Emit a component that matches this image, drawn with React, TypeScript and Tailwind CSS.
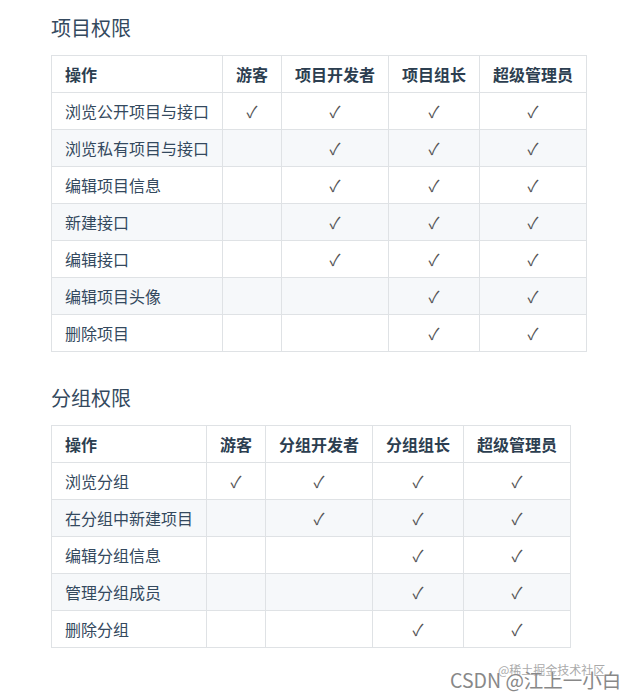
const font = { fontFamily: '"Noto Sans CJK SC", "Noto Sans", sans-serif' };

type Table = {
  title: string;
  head: string[];
  first: number;
  rows: [string, boolean[]][];
};

const tables: Table[] = [
  {
    title: "项目权限",
    head: ["操作", "游客", "项目开发者", "项目组长", "超级管理员"],
    first: 171,
    rows: [
      ["浏览公开项目与接口", [true, true, true, true]],
      ["浏览私有项目与接口", [false, true, true, true]],
      ["编辑项目信息", [false, true, true, true]],
      ["新建接口", [false, true, true, true]],
      ["编辑接口", [false, true, true, true]],
      ["编辑项目头像", [false, false, true, true]],
      ["删除项目", [false, false, true, true]],
    ],
  },
  {
    title: "分组权限",
    head: ["操作", "游客", "分组开发者", "分组组长", "超级管理员"],
    first: 155,
    rows: [
      ["浏览分组", [true, true, true, true]],
      ["在分组中新建项目", [false, true, true, true]],
      ["编辑分组信息", [false, false, true, true]],
      ["管理分组成员", [false, false, true, true]],
      ["删除分组", [false, false, true, true]],
    ],
  },
];

const widths = [59, 107, 91, 107];

function PermTable({ t, top }: { t: Table; top: string }) {
  return (
    <section className={top}>
      <h2 className="h-[28px] text-[20px] leading-[28px] text-[#34495e] font-normal">{t.title}</h2>
      <table className="mt-[13px] border-collapse text-[16px] text-[#34495e]">
        <colgroup>
          <col style={{ width: t.first }} />
          {widths.map((w, i) => (
            <col key={i} style={{ width: w }} />
          ))}
        </colgroup>
        <thead>
          <tr className="h-[37px]">
            {t.head.map((h, i) => (
              <th
                key={h}
                className={`border border-[#dfe2e5] p-0 font-bold text-[#2c3e50] ${i === 0 ? "pl-[13px] text-left" : "text-center"}`}
              >
                {h}
              </th>
            ))}
          </tr>
        </thead>
        <tbody>
          {t.rows.map(([name, checks], r) => (
            <tr key={name} className={`h-[37px] ${r % 2 === 1 ? "bg-[#f6f8fa]" : "bg-white"}`}>
              <td className="border border-[#dfe2e5] p-0 pl-[13px]">{name}</td>
              {checks.map((c, i) => (
                <td key={i} className="border border-[#dfe2e5] p-0 text-center text-[#555]">
                  {c ? "✓" : ""}
                </td>
              ))}
            </tr>
          ))}
        </tbody>
      </table>
    </section>
  );
}

export default function App() {
  return (
    <div className="relative w-[635px] h-[698px] bg-white overflow-hidden" style={font}>
      <div className="pl-[51px]">
        <PermTable t={tables[0]} top="pt-[14px]" />
        <PermTable t={tables[1]} top="pt-[32px]" />
      </div>
      <div className="absolute left-[498px] top-[662px] text-[12px] leading-[16px] text-[#aaa]">@稀土掘金技术社区</div>
      <div
        className="absolute left-[450px] top-[667px] text-[19.5px] leading-[26px] text-[#888]"
        style={{ textShadow: "0 0 2px #fff" }}
      >
        CSDN @江上一小白
      </div>
    </div>
  );
}
